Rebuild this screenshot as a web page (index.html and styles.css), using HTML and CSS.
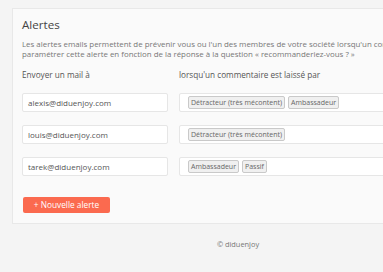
FILE: index.html
```html
<!DOCTYPE html>
<html lang="fr">
<head>
    <meta charset="UTF-8">
    <title>Alertes</title>
    <link rel="stylesheet" href="styles.css">
</head>
<body>
    <div class="page">
        <div class="panel">
            <h2 class="title">Alertes</h2>
            <p class="intro">Les alertes emails permettent de prévenir vous ou l'un des membres de votre société lorsqu'un commentaire est laissé. Vous pouvez<br>paramétrer cette alerte en fonction de la réponse à la question « recommanderiez-vous ? »</p>

            <div class="alerts">
                <div class="head">Envoyer un mail à</div>
                <div class="head">lorsqu'un commentaire est laissé par</div>

                <div class="field">alexis@diduenjoy.com</div>
                <div class="field tags">
                    <span class="tag">Détracteur (très mécontent)</span>
                    <span class="tag">Ambassadeur</span>
                </div>

                <div class="field">louis@diduenjoy.com</div>
                <div class="field tags">
                    <span class="tag">Détracteur (très mécontent)</span>
                </div>

                <div class="field">tarek@diduenjoy.com</div>
                <div class="field tags">
                    <span class="tag">Ambassadeur</span>
                    <span class="tag">Passif</span>
                </div>
            </div>

            <button class="add">+ Nouvelle alerte</button>
        </div>

        <div class="footer">© diduenjoy</div>
    </div>
</body>
</html>
```

FILE: styles.css
```css
* {
    margin: 0;
    padding: 0;
    box-sizing: border-box;
    font-family: 'Open Sans', sans-serif;
}

body {
    background: #f4f4f4;
    color: #555;
    overflow: hidden;
}

.page {
    padding: 8px 0 0 12px;
}

.panel {
    width: 560px;
    background: #fafafa;
    border: 1px solid #e8e8e8;
    padding: 8px 9px 10px 9px;
}

.title {
    font-size: 11.6px;
    font-weight: 400;
    color: #444;
    line-height: 16px;
    margin-bottom: 7px;
}

.intro {
    font-size: 7.9px;
    line-height: 9.5px;
    color: #777;
    width: 540px;
    white-space: nowrap;
    margin-bottom: 10px;
}

.alerts {
    display: grid;
    grid-template-columns: 146px 1fr;
    column-gap: 11px;
    row-gap: 13px;
    margin-bottom: 15px;
    width: 440px;
}

.head {
    font-size: 8.2px;
    line-height: 11px;
    color: #555;
}

.field {
    height: 19px;
    background: #fff;
    border: 1px solid #e6e6e6;
    border-radius: 2px;
    font-size: 8px;
    color: #555;
    padding: 0 5px;
    display: flex;
    align-items: center;
}

.tags {
    gap: 3px;
    padding: 0 8px;
}

.tag {
    font-size: 7px;
    line-height: 11px;
    color: #666;
    background: #f0f0f0;
    border: 1px solid #c9c9c9;
    border-radius: 2px;
    padding: 0 2px;
}

.add {
    border: none;
    background: #fb6a4f;
    color: #fff;
    font-size: 8.3px;
    height: 16px;
    width: 87px;
    border-radius: 2px;
    margin-left: 1px;
}

.footer {
    width: 452px;
    text-align: center;
    font-size: 7.4px;
    color: #777;
    padding-top: 15px;
}
```
